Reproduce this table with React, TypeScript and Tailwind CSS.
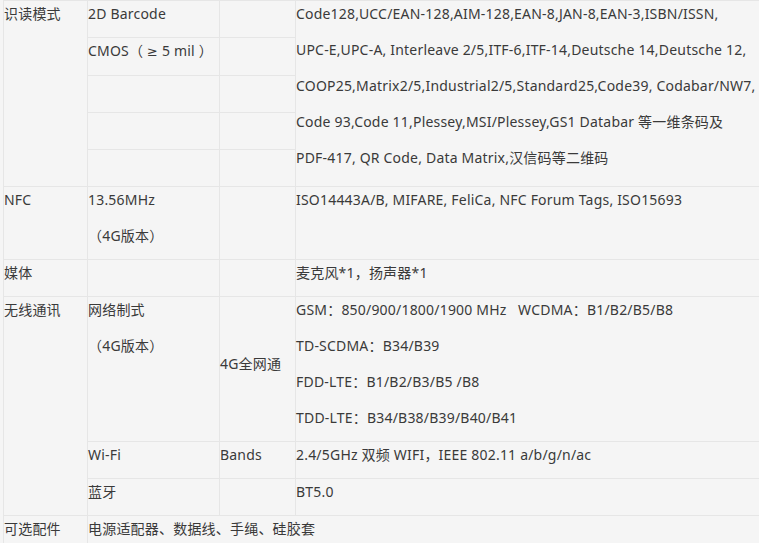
const font = {
  fontFamily: '"Noto Sans", "Noto Sans CJK SC", sans-serif',
};

const td = "border border-[#e6e6e6] p-0 align-top";

// one paragraph per visual line, 26px line + 10px gap
const Line = ({ children }: { children?: React.ReactNode }) => (
  <p className="leading-[26px] mb-[10px] whitespace-nowrap">{children ?? "\u00a0"}</p>
);

const App = () => {
  return (
    <div
      className="w-[759px] h-[543px] overflow-hidden bg-[#f5f5f5] text-[14px] tracking-[0.2px] text-[#3a3a3a]"
      style={font}
    >
      <table className="ml-[3px] w-[760px] border-collapse table-fixed">
        <colgroup>
          <col className="w-[84px]" />
          <col className="w-[132px]" />
          <col className="w-[76px]" />
          <col />
        </colgroup>
        <tbody>
          <tr>
            <td className={td} rowSpan={5}>
              <Line>识读模式</Line>
            </td>
            <td className={td}>
              <Line>2D Barcode</Line>
            </td>
            <td className={td}>
              <Line />
            </td>
            <td className={td} rowSpan={5}>
              <Line>Code128,UCC/EAN-128,AIM-128,EAN-8,JAN-8,EAN-3,ISBN/ISSN,</Line>
              <Line>UPC-E,UPC-A, Interleave 2/5,ITF-6,ITF-14,Deutsche 14,Deutsche 12,</Line>
              <Line>COOP25,Matrix2/5,Industrial2/5,Standard25,Code39, Codabar/NW7,</Line>
              <Line>Code 93,Code 11,Plessey,MSI/Plessey,GS1 Databar 等一维条码及</Line>
              <Line>PDF-417, QR Code, Data Matrix,汉信码等二维码</Line>
            </td>
          </tr>
          <tr>
            <td className={td}>
              <Line>
                CMOS（ <span style={{ fontFamily: '"DejaVu Sans", sans-serif' }} className="text-[13px]">≥</span> 5 mil ）
              </Line>
            </td>
            <td className={td}>
              <Line />
            </td>
          </tr>
          {[0, 1, 2].map((i) => (
            <tr key={i}>
              <td className={td}>
                <Line />
              </td>
              <td className={td}>
                <Line />
              </td>
            </tr>
          ))}

          {/* NFC */}
          <tr>
            <td className={td}>
              <Line>NFC</Line>
            </td>
            <td className={td}>
              <Line>13.56MHz</Line>
              <Line>（4G版本）</Line>
            </td>
            <td className={td} />
            <td className={td}>
              <Line>ISO14443A/B, MIFARE, FeliCa, NFC Forum Tags, ISO15693</Line>
            </td>
          </tr>

          {/* 媒体 */}
          <tr>
            <td className={td}>
              <Line>媒体</Line>
            </td>
            <td className={td} />
            <td className={td} />
            <td className={td}>
              <Line>麦克风*1，扬声器*1</Line>
            </td>
          </tr>

          {/* 无线通讯 */}
          <tr>
            <td className={td} rowSpan={3}>
              <Line>无线通讯</Line>
            </td>
            <td className={td}>
              <Line>网络制式</Line>
              <Line>（4G版本）</Line>
            </td>
            <td className={`${td} !align-middle`}>
              <Line>4G全网通</Line>
            </td>
            <td className={td}>
              <Line>GSM：850/900/1800/1900 MHz&nbsp;&nbsp; WCDMA：B1/B2/B5/B8</Line>
              <Line>TD-SCDMA：B34/B39</Line>
              <Line>FDD-LTE：B1/B2/B3/B5 /B8</Line>
              <Line>TDD-LTE：B34/B38/B39/B40/B41</Line>
            </td>
          </tr>
          <tr>
            <td className={td}>
              <Line>Wi-Fi</Line>
            </td>
            <td className={td}>
              <Line>Bands</Line>
            </td>
            <td className={td}>
              <Line>2.4/5GHz 双频 WIFI，IEEE 802.11 a/b/g/n/ac</Line>
            </td>
          </tr>
          <tr>
            <td className={td}>
              <Line>蓝牙</Line>
            </td>
            <td className={td} />
            <td className={td}>
              <Line>BT5.0</Line>
            </td>
          </tr>

          {/* 可选配件 */}
          <tr>
            <td className={td}>
              <Line>可选配件</Line>
            </td>
            <td className={td} colSpan={3}>
              <Line>电源适配器、数据线、手绳、硅胶套</Line>
            </td>
          </tr>
        </tbody>
      </table>
    </div>
  );
};

export default App;
